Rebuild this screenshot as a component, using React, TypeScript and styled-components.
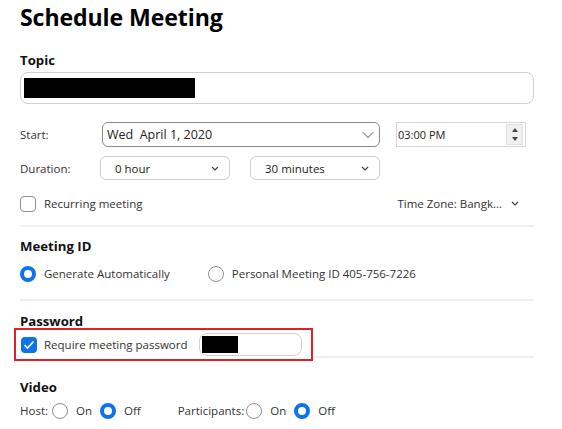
import React from "react";
import styled, { createGlobalStyle } from "styled-components";

const Global = createGlobalStyle`
  html, body { margin: 0; padding: 0; background: #fff; }
  body { font-family: "Open Sans", "Noto Sans", sans-serif; color: #232333; }
`;

const Page = styled.div`
  width: 514px;
  padding: 0 20px;
  display: flex;
  flex-direction: column;
`;

const Title = styled.h1`
  margin: 0;
  height: 40px;
  font-size: 23.1px;
  line-height: 34px;
  font-weight: 700;
  color: #000;
  letter-spacing: -0.1px;
`;

const SectionLabel = styled.div<{ $top: number }>`
  margin-top: ${(p) => p.$top}px;
  font-size: 13.2px;
  font-weight: 700;
  color: #111;
  line-height: 20px;
  height: 20px;
`;

const TextBox = styled.div`
  margin-top: 2px;
  height: 32px;
  box-sizing: border-box;
  border: 1.5px solid #cfcfd6;
  border-radius: 8px;
  display: flex;
  align-items: center;
  padding-left: 3px;
`;

const Redacted = styled.div<{ $w: number; $h: number }>`
  width: ${(p) => p.$w}px;
  height: ${(p) => p.$h}px;
  background: #000;
`;

const Row = styled.div<{ $top: number; $h: number }>`
  margin-top: ${(p) => p.$top}px;
  height: ${(p) => p.$h}px;
  display: flex;
  align-items: center;
  font-size: 11.5px;
`;

const RowLabel = styled.span<{ $w: number }>`
  width: ${(p) => p.$w}px;
  color: #333;
  flex-shrink: 0;
`;

const Select = styled.div<{ $w: number; $dark?: boolean; $pad: number }>`
  width: ${(p) => p.$w}px;
  height: 100%;
  box-sizing: border-box;
  border: 1px solid ${(p) => (p.$dark ? "#8a8a8a" : "#cfcfd4")};
  border-radius: 6px;
  display: flex;
  align-items: center;
  justify-content: space-between;
  padding: 0 ${(p) => (p.$dark ? 5 : 10)}px 0 ${(p) => p.$pad}px;
  color: #222;
  white-space: pre;
  font-size: ${(p) => (p.$dark ? 12.5 : 11.5)}px;
`;

const TimeBox = styled.div`
  margin-left: 16px;
  width: 130px;
  height: 25px;
  box-sizing: border-box;
  border: 1px solid #d6d6d6;
  display: flex;
  align-items: center;
  justify-content: space-between;
  padding-left: 1px;
  padding-right: 2px;
  color: #222;
  font-size: 11px;
`;

const Spinner = styled.div`
  width: 15px;
  height: 19px;
  background: #f0f0f0;
  border: 1px solid #e0e0e0;
  display: flex;
  flex-direction: column;
  align-items: center;
  justify-content: space-around;
`;

const Gap = styled.div<{ $w: number }>`
  width: ${(p) => p.$w}px;
  flex-shrink: 0;
`;

const Spacer = styled.div`
  flex: 1;
`;

const CheckBox = styled.span<{ $on?: boolean }>`
  width: 16px;
  height: 16px;
  box-sizing: border-box;
  border-radius: 4px;
  border: ${(p) => (p.$on ? "none" : "1.5px solid #8f8f99")};
  background: ${(p) => (p.$on ? "#0e72ed" : "#fff")};
  display: inline-flex;
  align-items: center;
  justify-content: center;
  flex-shrink: 0;
`;

const Radio = styled.span<{ $on?: boolean }>`
  width: 16px;
  height: 16px;
  box-sizing: border-box;
  border-radius: 50%;
  border: ${(p) => (p.$on ? "4.5px solid #0e72ed" : "1px solid #8f8f99")};
  background: #fff;
  display: inline-block;
  flex-shrink: 0;
`;

const OptText = styled.span<{ $ml: number; $mr?: number }>`
  margin-left: ${(p) => p.$ml}px;
  margin-right: ${(p) => p.$mr ?? 0}px;
  color: #333;
  white-space: nowrap;
`;

const Divider = styled.div<{ $top: number }>`
  margin-top: ${(p) => p.$top}px;
  height: 2px;
  background: #f0f0f2;
`;

const Highlight = styled.div`
  position: relative;
  z-index: 1;
  margin: -3px 0 0 -6px;
  width: 299px;
  height: 33px;
  box-sizing: border-box;
  border: 2px solid #d9222a;
  background: #fff;
  display: flex;
  align-items: center;
  padding-left: 5px;
  font-size: 11.5px;
`;

const PwBox = styled.div`
  margin-left: 11px;
  width: 103px;
  height: 23px;
  box-sizing: border-box;
  border: 1.5px solid #cfcfd6;
  border-radius: 8px;
  display: flex;
  align-items: center;
  padding-left: 2px;
`;

const TimeZone = styled.span`
  color: #333;
  margin-right: 15px;
  display: flex;
  align-items: center;
  gap: 9px;
`;

const Chevron = ({ big }: { big?: boolean }) =>
  big ? (
    <svg width="12" height="8" viewBox="0 0 12 8">
      <path d="M1 1.5 L6 6.5 L11 1.5" fill="none" stroke="#9a9a9a" strokeWidth="1.2" />
    </svg>
  ) : (
    <svg width="8" height="5" viewBox="0 0 8 5">
      <path d="M1 1 L4 4 L7 1" fill="none" stroke="#444" strokeWidth="1.2" />
    </svg>
  );

const Check = () => (
  <svg width="12" height="10" viewBox="0 0 12 10">
    <path d="M1.5 5 L4.5 8 L10.5 1.5" fill="none" stroke="#fff" strokeWidth="1.6" />
  </svg>
);

const Tri = ({ up }: { up?: boolean }) => (
  <svg width="6" height="4" viewBox="0 0 6 4">
    <path d={up ? "M0 4 L3 0 L6 4 Z" : "M0 0 L3 4 L6 0 Z"} fill="#444" />
  </svg>
);

export default function App() {
  return (
    <>
      <Global />
      <Page>
        <Title>Schedule Meeting</Title>
        <SectionLabel $top={10}>Topic</SectionLabel>
        <TextBox>
          <Redacted $w={171} $h={20} />
        </TextBox>

        <Row $top={18} $h={25}>
          <RowLabel $w={82}>Start:</RowLabel>
          <Select $w={278} $dark $pad={4}>
            <span>Wed  April 1, 2020</span>
            <Chevron big />
          </Select>
          <TimeBox>
            <span>03:00 PM</span>
            <Spinner>
              <Tri up />
              <Tri />
            </Spinner>
          </TimeBox>
        </Row>

        <Row $top={9} $h={24}>
          <RowLabel $w={80}>Duration:</RowLabel>
          <Select $w={130} $pad={14}>
            <span>0 hour</span>
            <Chevron />
          </Select>
          <Gap $w={20} />
          <Select $w={130} $pad={14}>
            <span>30 minutes</span>
            <Chevron />
          </Select>
        </Row>

        <Row $top={15} $h={17}>
          <CheckBox />
          <OptText $ml={8}>Recurring meeting</OptText>
          <Spacer />
          <TimeZone>
            Time Zone: Bangk...
            <Chevron />
          </TimeZone>
        </Row>

        <Divider $top={13} />
        <SectionLabel $top={9}>Meeting ID</SectionLabel>
        <Row $top={9} $h={17}>
          <Radio $on />
          <OptText $ml={8} $mr={38}>Generate Automatically</OptText>
          <Radio />
          <OptText $ml={8}>Personal Meeting ID 405-756-7226</OptText>
        </Row>

        <Divider $top={17} />
        <SectionLabel $top={10}>Password</SectionLabel>
        <Highlight>
          <CheckBox $on>
            <Check />
          </CheckBox>
          <OptText $ml={7}>Require meeting password</OptText>
          <PwBox>
            <Redacted $w={36} $h={17} />
          </PwBox>
        </Highlight>
        <Divider $top={-5} />

        <SectionLabel $top={19}>Video</SectionLabel>
        <Row $top={5} $h={17}>
          <OptText $ml={0} $mr={4}>Host:</OptText>
          <Radio />
          <OptText $ml={8} $mr={8}>On</OptText>
          <Radio $on />
          <OptText $ml={8} $mr={37}>Off</OptText>
          <OptText $ml={0} $mr={2}>Participants:</OptText>
          <Radio />
          <OptText $ml={8} $mr={8}>On</OptText>
          <Radio $on />
          <OptText $ml={8}>Off</OptText>
        </Row>
      </Page>
    </>
  );
}
